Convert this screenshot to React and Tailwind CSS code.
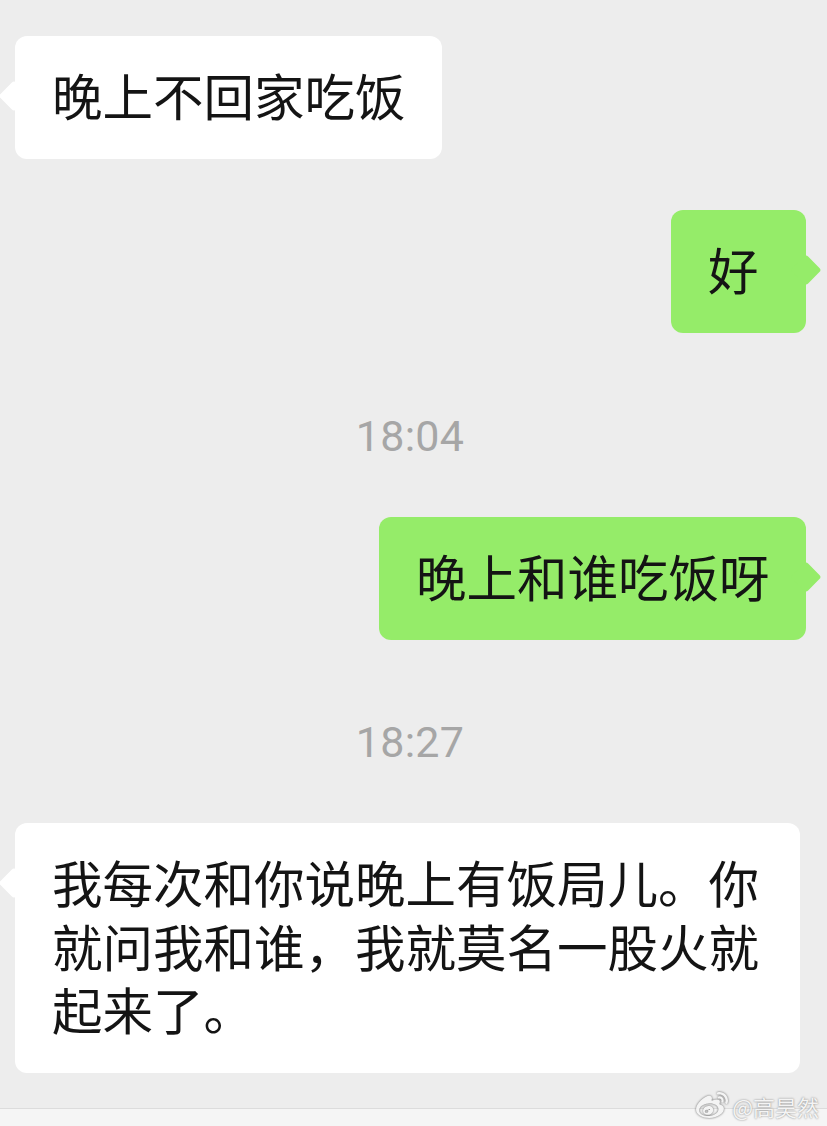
import { FaWeibo } from 'react-icons/fa';

const cjk = { fontFamily: '"Noto Sans CJK SC", sans-serif' };

// chat bubble with the little diamond tail on the side
const Bubble = ({ mine, className, children }) => (
  <div
    className={`relative rounded-[12px] px-[37px] text-[50.5px] text-[#141414] ${
      mine ? 'bg-[#95ec69]' : 'bg-white'
    } ${className}`}
  >
    <span
      className={`absolute top-[49px] size-[22px] rotate-45 rounded-[3px] ${
        mine ? 'right-[-11px] bg-[#95ec69]' : 'left-[-12px] bg-white'
      }`}
    />
    <div className="relative whitespace-pre">{children}</div>
  </div>
);

const Time = ({ children, className }) => (
  <div
    className={`pr-[7px] text-center text-[43px] leading-[50px] text-[#a6a6a6] font-['Roboto',sans-serif] font-normal tracking-[0.3px] ${className}`}
  >
    {children}
  </div>
);

export default function App() {
  return (
    <div
      className="relative flex h-[1126px] w-[827px] flex-col overflow-hidden bg-[#ededed] pt-[36px]"
      style={cjk}
    >
      <div className="flex pl-[15px]">
        <Bubble className="flex h-[123px] w-[427px] items-center pb-[6px]">晚上不回家吃饭</Bubble>
      </div>

      <div className="mt-[51px] flex justify-end pr-[21px]">
        <Bubble mine className="flex h-[123px] w-[135px] items-center pb-[6px]">好</Bubble>
      </div>

      <Time className="mt-[78px]">18:04</Time>

      <div className="mt-[56px] flex justify-end pr-[21px]">
        <Bubble mine className="flex h-[123px] w-[427px] items-center pb-[6px]">晚上和谁吃饭呀</Bubble>
      </div>

      <Time className="mt-[77px]">18:27</Time>

      <div className="mt-[56px] pl-[15px]">
        <Bubble className="h-[250px] w-[785px] pt-[27px] leading-[63.5px]">
          {'我每次和你说晚上有饭局儿。你\n就问我和谁，我就莫名一股火就\n起来了。'}
        </Bubble>
      </div>

      <div className="mt-[35px] flex-1 border-t border-[#dcdcdc] bg-[#f5f5f5]" />

      <div className="absolute right-[8px] top-[1090px] flex items-center gap-[4px] text-[22px] leading-[30px] text-[#f4f4f4] [text-shadow:0_0_2px_#777777]">
        <FaWeibo className="size-[32px] text-[#f4f4f4] drop-shadow-[0_0_1px_#666666]" />
        <span>@高昊然</span>
      </div>
    </div>
  );
}
